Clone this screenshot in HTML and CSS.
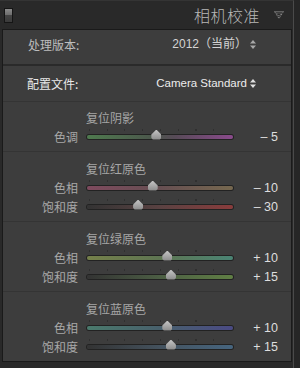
FILE: index.html
```html
<!DOCTYPE html>
<html lang="zh-CN">

<head>
  <meta charset="UTF-8">
  <meta name="viewport" content="width=device-width, initial-scale=1.0">
  <title>相机校准</title>
  <link rel="stylesheet" href="styles.css">
</head>

<body>
  <div class="module">
    <div class="moduleHead">
      <span class="soloToggle"></span>
      <h2 class="moduleTitle">相机校准</h2>
      <svg class="collapseIcon" width="10" height="8" viewBox="0 0 10 8">
        <polygon points="0.5,0.5 9.5,0.5 5,7.5" fill="none" stroke="#9a9a9a" stroke-width="1" stroke-dasharray="1 1" />
        <polygon points="2.5,2 7.5,2 5,5.5" fill="none" stroke="#8a8a8a" stroke-width="1" stroke-dasharray="1 1" />
      </svg>
    </div>

    <div class="panel">
      <div class="pickRow process">
        <label>处理版本:</label>
        <span class="picker">2012（当前）
          <svg class="updown" width="6" height="9" viewBox="0 0 6 9">
            <path d="M3 0 L6 3.5 L0 3.5 Z M0 5.5 L6 5.5 L3 9 Z" fill="#a8a8a8" />
          </svg>
        </span>
      </div>

      <div class="pickRow profile">
        <label>配置文件:</label>
        <span class="picker latin">Camera Standard
          <svg class="updown" width="6" height="9" viewBox="0 0 6 9">
            <path d="M3 0 L6 3.5 L0 3.5 Z M0 5.5 L6 5.5 L3 9 Z" fill="#e0e0e0" />
          </svg>
        </span>
      </div>

      <div class="group tone">
        <div class="groupTitle">复位阴影</div>
        <div class="sliderRow">
          <span class="sliderLabel">色调</span>
          <div class="track trackTint"><span class="thumb" style="left: 47.5%"></span></div>
          <span class="sliderValue">– 5</span>
        </div>
      </div>

      <div class="group">
        <div class="groupTitle">复位红原色</div>
        <div class="sliderRow">
          <span class="sliderLabel">色相</span>
          <div class="track trackRedHue"><span class="thumb" style="left: 45%"></span></div>
          <span class="sliderValue">– 10</span>
        </div>
        <div class="sliderRow">
          <span class="sliderLabel">饱和度</span>
          <div class="track trackRedSat"><span class="thumb" style="left: 35%"></span></div>
          <span class="sliderValue">– 30</span>
        </div>
      </div>

      <div class="group">
        <div class="groupTitle">复位绿原色</div>
        <div class="sliderRow">
          <span class="sliderLabel">色相</span>
          <div class="track trackGreenHue"><span class="thumb" style="left: 55%"></span></div>
          <span class="sliderValue">+ 10</span>
        </div>
        <div class="sliderRow">
          <span class="sliderLabel">饱和度</span>
          <div class="track trackGreenSat"><span class="thumb" style="left: 57.5%"></span></div>
          <span class="sliderValue">+ 15</span>
        </div>
      </div>

      <div class="group">
        <div class="groupTitle">复位蓝原色</div>
        <div class="sliderRow">
          <span class="sliderLabel">色相</span>
          <div class="track trackBlueHue"><span class="thumb" style="left: 55%"></span></div>
          <span class="sliderValue">+ 10</span>
        </div>
        <div class="sliderRow">
          <span class="sliderLabel">饱和度</span>
          <div class="track trackBlueSat"><span class="thumb" style="left: 57.5%"></span></div>
          <span class="sliderValue">+ 15</span>
        </div>
      </div>
    </div>
  </div>
</body>

</html>
```

FILE: styles.css
```css
* {
  margin: 0;
  padding: 0;
  box-sizing: border-box;
}

body {
  background-color: #262626;
  font-family: "Liberation Sans", "Noto Sans CJK SC", sans-serif;
  font-size: 12px;
  color: #c8c8c8;
}

.module {
  width: 294px;
  height: 368px;
  background-color: #292929;
  border-right: 1px solid #4a4a4a;
  border-top: 1px solid #343434;
}

.moduleHead {
  display: flex;
  align-items: center;
  height: 28px;
  padding: 0 6px 0 4px;
}

.soloToggle {
  width: 9px;
  height: 15px;
  border: 1px solid #151515;
  background: linear-gradient(#8a8a8a 0, #6a6a6a 50%, #444 50%, #3a3a3a 100%);
}

.moduleTitle {
  margin-left: auto;
  font-family: "Noto Sans CJK SC", sans-serif;
  font-weight: 300;
  font-size: 16px;
  letter-spacing: 0.5px;
  color: #b8b8b8;
}

.collapseIcon {
  margin-left: 14px;
  margin-right: 3px;
}

.panel {
  margin: 0 1px 0 2px;
  background-color: #3d3d3d;
  border: 1px solid #1a1a1a;
}

.pickRow {
  display: flex;
  align-items: center;
  line-height: 19px;
  padding-right: 35px;
}

.pickRow label {
  font-family: "Noto Sans CJK SC", sans-serif;
  font-size: 12px;
}

.process {
  padding-top: 5px;
  padding-bottom: 10px;
  padding-left: 25px;
  border-bottom: 2px solid #2a2a2a;
  color: #bdbdbd;
}

.profile {
  padding-top: 8px;
  padding-bottom: 8px;
  padding-left: 24px;
  color: #e8e8e8;
}

.picker {
  margin-left: auto;
  display: flex;
  align-items: center;
  font-family: "Liberation Sans", "Noto Sans CJK SC", sans-serif;
  font-size: 12px;
  color: #d4d4d4;
}

.picker.latin {
  font-size: 11.5px;
  color: #ececec;
}

.updown {
  margin-left: 3px;
}

.group {
  border-top: 1px solid #343434;
  padding: 7px 13px 5px 0;
}

.group.tone {
  padding-top: 6px;
}

.groupTitle {
  font-family: "Noto Sans CJK SC", sans-serif;
  line-height: 19px;
  padding-left: 83px;
  color: #a6a6a6;
}

.sliderRow {
  display: grid;
  grid-template-columns: 75px 146px 1fr;
  column-gap: 9px;
  align-items: center;
  height: 19px;
}

.sliderLabel {
  font-family: "Noto Sans CJK SC", sans-serif;
  text-align: right;
  color: #a8a8a8;
}

.sliderValue {
  text-align: right;
  font-size: 12.5px;
  color: #dedede;
}

.track {
  position: relative;
  height: 4px;
  border-radius: 2px;
  box-shadow: 0 0 0 1px #222;
}

.track::before {
  content: "";
  position: absolute;
  left: 2px;
  right: 2px;
  top: -6px;
  height: 2px;
  background: repeating-linear-gradient(to right, #303030 0, #303030 1px, transparent 1px, transparent 17.75px);
}

.thumb {
  position: absolute;
  top: -5px;
  width: 10px;
  height: 10px;
  transform: translateX(-50%);
  background: linear-gradient(#c4c4c4, #8a8a8a);
  clip-path: polygon(50% 0, 100% 50%, 100% 85%, 85% 100%, 15% 100%, 0 85%, 0 50%);
}

.trackTint {
  background: linear-gradient(to right, #4e7a4e, #4c574c 45%, #574b57 60%, #8a4a8c);
}

.trackRedHue {
  background: linear-gradient(to right, #7e4a5e, #664f52 50%, #76684f);
}

.trackRedSat {
  background: linear-gradient(to right, #333, #5a4242 50%, #8a3c3c);
}

.trackGreenHue {
  background: linear-gradient(to right, #75804a, #5e7552 50%, #4a8474);
}

.trackGreenSat {
  background: linear-gradient(to right, #333, #4c5e44 50%, #607f44);
}

.trackBlueHue {
  background: linear-gradient(to right, #4a7a6c, #48606c 50%, #4a4a84);
}

.trackBlueSat {
  background: linear-gradient(to right, #333, #44525e 50%, #46657f);
}
```
